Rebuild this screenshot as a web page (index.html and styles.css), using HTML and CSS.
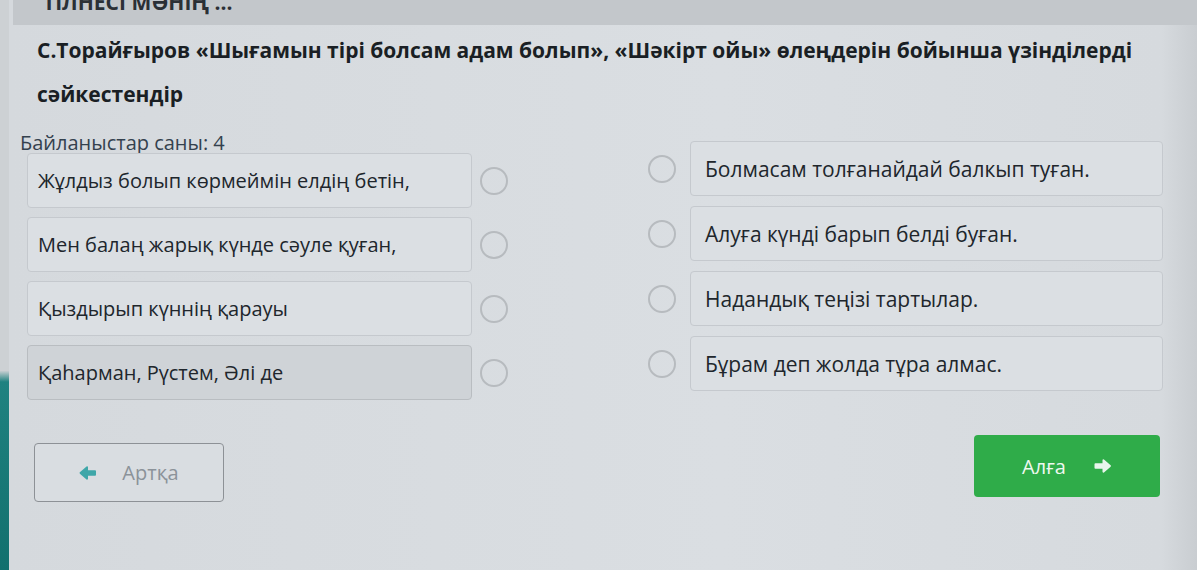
FILE: index.html
```html
<html>
  <head>
    <title>Сәйкестендір</title>
    <link rel="stylesheet" href="styles.css">
  </head>
  <body>
    <div class="screen">
      <div class="edge"></div>
      <div class="page">
        <div class="topbar"><span class="topbar-text">ТІЛНЕСІ МӘНІҢ ...</span></div>
        <h1 class="title">С.Торайғыров «Шығамын тірі болсам адам болып», «Шәкірт ойы» өлеңдерін бойынша үзінділерді сәйкестендір</h1>
        <div class="task">
          <div class="col-left">
            <div class="count">Байланыстар саны: 4</div>
            <div class="list left-list">
              <div class="row"><div class="card">Жұлдыз болып көрмеймін елдің бетін,</div><span class="dot"></span></div>
              <div class="row"><div class="card">Мен балаң жарық күнде сәуле қуған,</div><span class="dot"></span></div>
              <div class="row"><div class="card">Қыздырып күннің қарауы</div><span class="dot"></span></div>
              <div class="row"><div class="card picked">Қаһарман, Рүстем, Әлі де</div><span class="dot"></span></div>
            </div>
          </div>
          <div class="col-right">
            <div class="list right-list">
              <div class="row"><span class="dot"></span><div class="card">Болмасам толғанайдай балкып туған.</div></div>
              <div class="row"><span class="dot"></span><div class="card">Алуға күнді барып белді буған.</div></div>
              <div class="row"><span class="dot"></span><div class="card">Надандық теңізі тартылар.</div></div>
              <div class="row"><span class="dot"></span><div class="card">Бұрам деп жолда тұра алмас.</div></div>
            </div>
          </div>
        </div>
        <div class="footer">
          <button class="btn btn-back">
            <svg width="18" height="16" viewBox="0 0 20 18"><path d="M18 7 H9 V2.5 L1.5 9 L9 15.5 V11 H18 Z" fill="#3fa7a9" stroke="#3fa7a9" stroke-width="2" stroke-linejoin="round"/></svg>
            <span>Артқа</span>
          </button>
          <button class="btn btn-next">
            <span>Алға</span>
            <svg width="19" height="16" viewBox="0 0 20 18"><path d="M2 7 H11 V2.5 L18.5 9 L11 15.5 V11 H2 Z" fill="#e9f5ec" stroke="#e9f5ec" stroke-width="2" stroke-linejoin="round"/></svg>
          </button>
        </div>
      </div>
    </div>
  </body>
</html>
```
FILE: styles.css
```css
body {
  margin: 0;
  font-family: "Open Sans", "Noto Sans", sans-serif;
  background: #d7dbdf;
}
.screen {
  display: flex;
  height: 570px;
  overflow: hidden;
}
.edge {
  width: 9px;
  background: linear-gradient(to bottom, #cdd1d4 0, #cdd1d4 65%, #1f8280 67%, #12706e 100%);
}
.page {
  flex: 1;
  background: linear-gradient(to right, #d5d9dd 0, #dadee2 60%, #d6dade 97%, #c9cdd1 100%);
}
.topbar {
  height: 25px;
  margin-left: 4px;
  background: #c3c7cb;
  overflow: hidden;
}
.topbar-text {
  display: block;
  margin-top: -12px;
  padding-left: 30px;
  font-size: 21px;
  font-weight: 700;
  line-height: 28px;
  color: #2b3036;
}
.title {
  margin: 3px 60px 0 28px;
  font-size: 21px;
  font-weight: 700;
  line-height: 44px;
  color: #1a1f24;
}
.task {
  display: flex;
  align-items: flex-start;
  margin-top: 17px;
  padding-left: 11px;
}
.col-left {
  width: 488px;
}
.count {
  font-size: 20px;
  line-height: 20px;
  color: #34414e;
}
.left-list {
  margin-left: 7px;
}
.col-right {
  margin-left: 140px;
  margin-top: 8px;
}
.row {
  display: flex;
  align-items: center;
  margin-bottom: 9px;
}
.left-list .row {
  gap: 8px;
}
.right-list .row {
  gap: 14px;
  margin-bottom: 10px;
}
.row:last-child {
  margin-bottom: 0;
}
.card {
  display: flex;
  align-items: center;
  height: 53px;
  border: 1px solid #c5c9ce;
  border-radius: 4px;
  background: #dbdfe3;
  font-size: 20px;
  color: #20262c;
  box-sizing: content-box;
}
.left-list .card {
  width: 436px;
  padding-left: 10px;
}
.right-list .card {
  width: 457px;
  padding-left: 14px;
  font-size: 21px;
}
.card.picked {
  background: #cfd3d7;
  border-color: #b9bdc1;
}
.dot {
  width: 24px;
  height: 24px;
  border: 2px solid #b7bbbf;
  border-radius: 50%;
}
.footer {
  display: flex;
  justify-content: space-between;
  align-items: flex-start;
  margin-top: 35px;
  padding: 0 37px 0 25px;
}
.btn {
  display: flex;
  align-items: center;
  justify-content: center;
  font-family: "Open Sans", "Noto Sans", sans-serif;
  font-size: 20px;
  border-radius: 4px;
}
.btn-back {
  width: 190px;
  height: 59px;
  margin-top: 8px;
  gap: 25px;
  border: 1px solid #8d9196;
  background: #d9dde1;
  color: #8b9299;
}
.btn-next {
  width: 186px;
  height: 62px;
  gap: 27px;
  border: none;
  background: #2fac49;
  color: #eef8f0;
}
```
